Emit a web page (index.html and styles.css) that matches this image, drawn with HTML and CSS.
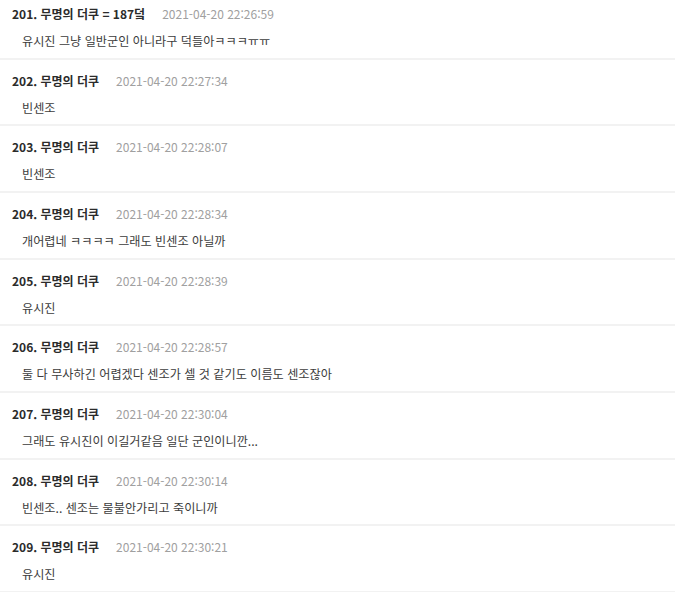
FILE: index.html
```html
<!DOCTYPE html>
<html lang="ko">

<head>
	<meta charset="UTF-8">
	<meta name="viewport" content="width=device-width, initial-scale=1.0">
	<link rel="stylesheet" href="styles.css">
	<title>무명의 더쿠</title>
</head>

<body>
	<div class="comments">
		<div class="comment">
			<div class="comment-head"><span class="comment-name">201. 무명의 더쿠 = 187덬</span><span class="comment-date">2021-04-20 22:26:59</span></div>
			<div class="comment-text">유시진 그냥 일반군인 아니라구 덕들아ㅋㅋㅋㅠㅠ</div>
		</div>
		<div class="comment">
			<div class="comment-head"><span class="comment-name">202. 무명의 더쿠</span><span class="comment-date">2021-04-20 22:27:34</span></div>
			<div class="comment-text">빈센조</div>
		</div>
		<div class="comment">
			<div class="comment-head"><span class="comment-name">203. 무명의 더쿠</span><span class="comment-date">2021-04-20 22:28:07</span></div>
			<div class="comment-text">빈센조</div>
		</div>
		<div class="comment">
			<div class="comment-head"><span class="comment-name">204. 무명의 더쿠</span><span class="comment-date">2021-04-20 22:28:34</span></div>
			<div class="comment-text">개어렵네 ㅋㅋㅋㅋ 그래도 빈센조 아닐까</div>
		</div>
		<div class="comment">
			<div class="comment-head"><span class="comment-name">205. 무명의 더쿠</span><span class="comment-date">2021-04-20 22:28:39</span></div>
			<div class="comment-text">유시진</div>
		</div>
		<div class="comment">
			<div class="comment-head"><span class="comment-name">206. 무명의 더쿠</span><span class="comment-date">2021-04-20 22:28:57</span></div>
			<div class="comment-text">둘 다 무사하긴 어렵겠다 센조가 셀 것 같기도 이름도 센조잖아</div>
		</div>
		<div class="comment">
			<div class="comment-head"><span class="comment-name">207. 무명의 더쿠</span><span class="comment-date">2021-04-20 22:30:04</span></div>
			<div class="comment-text">그래도 유시진이 이길거같음 일단 군인이니깐...</div>
		</div>
		<div class="comment">
			<div class="comment-head"><span class="comment-name">208. 무명의 더쿠</span><span class="comment-date">2021-04-20 22:30:14</span></div>
			<div class="comment-text">빈센조.. 센조는 물불안가리고 죽이니까</div>
		</div>
		<div class="comment">
			<div class="comment-head"><span class="comment-name">209. 무명의 더쿠</span><span class="comment-date">2021-04-20 22:30:21</span></div>
			<div class="comment-text">유시진</div>
		</div>
	</div>
</body>

</html>
```

FILE: styles.css
```css
* {
	box-sizing: border-box;
}

body {
	margin: 0;
	background: #fff;
	font-family: "Noto Sans CJK KR", "Noto Sans", sans-serif;
	font-size: 12px;
	overflow: hidden;
}

.comments {
	margin-top: -7px;
}

.comment {
	height: 66.67px;
	padding-top: 12px;
	border-bottom: 2px solid #f2f2f2;
}

.comment-head {
	display: flex;
	align-items: center;
	gap: 17px;
	height: 18px;
	line-height: 18px;
	padding-left: 12px;
}

.comment-name {
	font-weight: bold;
	color: #2b2b2b;
}

.comment-date {
	color: #a0a0a0;
}

.comment-text {
	margin-top: 9px;
	line-height: 18px;
	padding-left: 22px;
	font-size: 12.15px;
	color: #3c3c3c;
}
```
